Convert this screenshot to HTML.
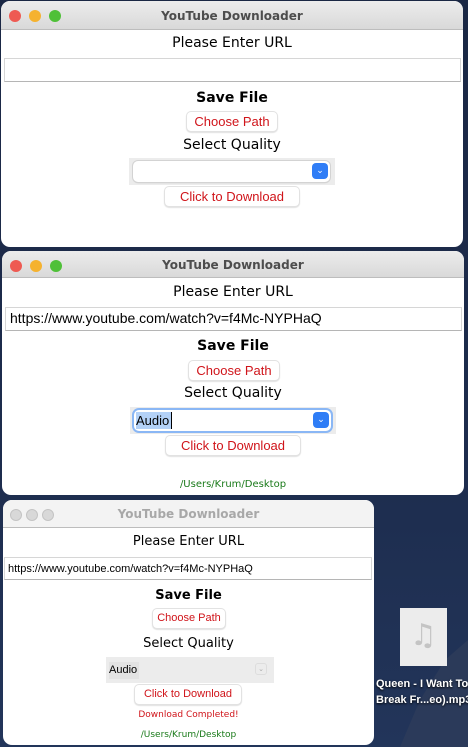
<!DOCTYPE html>
<html><head><meta charset="utf-8"><style>
*{box-sizing:border-box;margin:0;padding:0}
body{width:468px;height:747px;overflow:hidden;position:relative;background:linear-gradient(180deg,#1a2744 0%,#1d2c4d 60%,#22355a 100%);font-family:"DejaVu Sans","Liberation Sans",sans-serif}
.w{position:absolute;background:#fff;border-radius:9px;overflow:hidden}
.tb{position:absolute;left:0;right:0;top:0;background:linear-gradient(#ececec,#d9d9d9);border-bottom:1px solid #bdbdbd;text-align:center;font-weight:bold;color:#4d4d4d;font-size:12px}
.d{position:absolute;width:12px;height:12px;border-radius:50%;top:9px}
.a{position:absolute;left:0;right:0;text-align:center;color:#000;white-space:nowrap}
.e{position:absolute;border:1px solid #d6d6d6;border-bottom-color:#b5b5b5;background:#fff;font-family:"Liberation Sans",sans-serif;font-size:13px;padding-left:4px;line-height:21px}
.b{position:absolute;background:#fff;border:1px solid #e2e2e2;border-radius:5px;box-shadow:0 1px 1px rgba(0,0,0,.12);color:#d0141a;text-align:center;font-family:"Liberation Sans",sans-serif;font-size:13px}
.cg{position:absolute;background:#ececec}
.ci{position:absolute;background:#fff;border-radius:5px;box-shadow:0 0 0 1px #d3d3d3,0 1px 1px #bbb}
.ar{position:absolute;width:16px;height:16px;border-radius:4px;background:#2f7df6;color:#fff;font-size:9px;text-align:center;line-height:16px}
</style></head><body>
<svg style="position:absolute;left:0;top:0" width="468" height="747"><polygon points="400,747 420,700 445,660 468,640 468,747" fill="#2e3c5a" opacity=".8"/></svg>

<!-- window 1 -->
<div class="w" style="left:1px;top:1px;width:462px;height:246px">
 <div class="tb" style="height:29px;line-height:30px">YouTube Downloader</div>
 <div class="d" style="left:8px;background:#ee5a52"></div><div class="d" style="left:28px;background:#f5b22f"></div><div class="d" style="left:48px;background:#4fc038"></div>
 <div class="a" style="top:34px;font-size:14px">Please Enter URL</div>
 <div class="e" style="left:3px;top:57px;width:457px;height:24px"></div>
 <div class="a" style="top:89px;font-size:14px;font-weight:bold">Save File</div>
 <div class="b" style="left:185px;top:110px;width:92px;height:21px;line-height:19px">Choose Path</div>
 <div class="a" style="top:136px;font-size:14px">Select Quality</div>
 <div class="cg" style="left:128px;top:157px;width:206px;height:27px"></div>
 <div class="ci" style="left:132px;top:160px;width:197px;height:21px"></div>
 <div class="ar" style="left:311px;top:162px">⌄</div>
 <div class="b" style="left:163px;top:185px;width:136px;height:21px;line-height:19px">Click to Download</div>
</div>

<!-- window 2 -->
<div class="w" style="left:2px;top:251px;width:462px;height:244px">
 <div class="tb" style="height:27px;line-height:28px">YouTube Downloader</div>
 <div class="d" style="left:8px;background:#ee5a52"></div><div class="d" style="left:28px;background:#f5b22f"></div><div class="d" style="left:48px;background:#4fc038"></div>
 <div class="a" style="top:33px;font-size:14px">Please Enter URL</div>
 <div class="e" style="left:3px;top:56px;width:457px;height:24px;font-size:14px">https://www.youtube.com/watch?v=f4Mc-NYPHaQ</div>
 <div class="a" style="top:87px;font-size:14px;font-weight:bold">Save File</div>
 <div class="b" style="left:186px;top:109px;width:92px;height:21px;line-height:19px">Choose Path</div>
 <div class="a" style="top:134px;font-size:14px">Select Quality</div>
 <div class="cg" style="left:128px;top:156px;width:206px;height:27px"></div>
 <div class="ci" style="left:132px;top:159px;width:197px;height:21px;box-shadow:0 0 0 2px #8ab7f5"></div>
 <div style="position:absolute;left:134px;top:161px;width:36px;height:17px;background:#b3d1f7;font-family:'Liberation Sans',sans-serif;font-size:13px;line-height:17px;border-right:1px solid #000">Audio</div>
 <div class="ar" style="left:311px;top:161px">⌄</div>
 <div class="b" style="left:163px;top:184px;width:136px;height:21px;line-height:19px">Click to Download</div>
 <div class="a" style="top:228px;font-size:10px;color:#1a7a1a">/Users/Krum/Desktop</div>
</div>

<!-- window 3 -->
<div class="w" style="left:3px;top:500px;width:371px;height:245px">
 <div class="tb" style="height:28px;line-height:29px;color:#a8a8a8;background:#f3f3f3">YouTube Downloader</div>
 <div class="d" style="left:7px;background:#d8d8d8;border:1px solid #c4c4c4"></div><div class="d" style="left:23px;background:#d8d8d8;border:1px solid #c4c4c4"></div><div class="d" style="left:39px;background:#d8d8d8;border:1px solid #c4c4c4"></div>
 <div class="a" style="top:34px;font-size:13px">Please Enter URL</div>
 <div class="e" style="left:1px;top:57px;width:368px;height:23px;font-size:11px;padding-left:3px;line-height:22px">https://www.youtube.com/watch?v=f4Mc-NYPHaQ</div>
 <div class="a" style="top:88px;font-size:13px;font-weight:bold">Save File</div>
 <div class="b" style="left:149px;top:108px;width:74px;height:21px;line-height:19px;font-size:11px">Choose Path</div>
 <div class="a" style="top:136px;font-size:13px">Select Quality</div>
 <div class="cg" style="left:103px;top:157px;width:168px;height:26px"></div>
 <div style="position:absolute;left:106px;top:162px;width:30px;height:17px;background:#e3e3e3;font-family:'Liberation Sans',sans-serif;font-size:11px;line-height:17px">Audio</div>
 <div style="position:absolute;left:252px;top:163px;width:12px;height:12px;border-radius:3px;border:1px solid #ddd;color:#aaa;font-size:7px;text-align:center;line-height:11px">⌄</div>
 <div class="b" style="left:131px;top:184px;width:108px;height:21px;line-height:19px;font-size:11px">Click to Download</div>
 <div class="a" style="top:210px;font-size:9px;color:#d0141a">Download Completed!</div>
 <div class="a" style="top:230px;font-size:9px;color:#1a7a1a">/Users/Krum/Desktop</div>
</div>

<div style="position:absolute;left:400px;top:608px;width:47px;height:58px;background:#ececec"></div>
<div style="position:absolute;left:400px;top:616px;width:47px;text-align:center;font-size:30px;color:#c4c4c4;line-height:40px">♫</div>
<div style="position:absolute;left:376px;top:676px;width:92px;text-align:center;color:#fff;font-family:'Liberation Sans',sans-serif;font-weight:bold;font-size:11px;line-height:16px;text-shadow:0 1px 2px #000;white-space:nowrap">Queen - I Want To<br>Break Fr...eo).mp3</div>
</body></html>
